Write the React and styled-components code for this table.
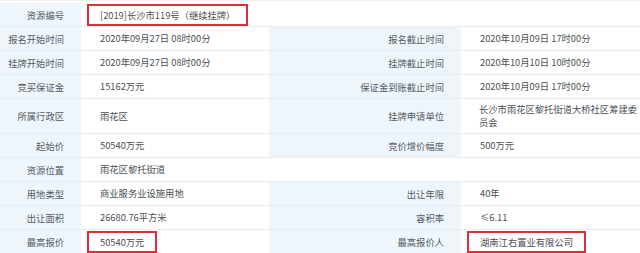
import React from 'react';
import styled, {createGlobalStyle} from "styled-components";

const GlobalStyle = createGlobalStyle`
    html, body {
        margin: 0;
        padding: 0;
        background: #fff;
    }
    body {
        font-family: "Noto Sans CJK SC", "Noto Sans", sans-serif;
    }
`

const rows = [
	{label: "资源编号", value: "[2019]长沙市119号（继续挂牌）", full: true, mark: true},
	{label: "报名开始时间", value: "2020年09月27日 08时00分", label2: "报名截止时间", value2: "2020年10月09日 17时00分"},
	{label: "挂牌开始时间", value: "2020年09月27日 08时00分", label2: "挂牌截止时间", value2: "2020年10月10日 10时00分"},
	{label: "竞买保证金", value: "15162万元", label2: "保证金到账截止时间", value2: "2020年10月09日 17时00分"},
	{label: "所属行政区", value: "雨花区", label2: "挂牌申请单位", value2: "长沙市雨花区黎托街道大桥社区筹建委员会", tall: true},
	{label: "起始价", value: "50540万元", label2: "竞价增价幅度", value2: "500万元"},
	{label: "资源位置", value: "雨花区黎托街道", full: true},
	{label: "用地类型", value: "商业服务业设施用地", label2: "出让年限", value2: "40年"},
	{label: "出让面积", value: "26680.76平方米", label2: "容积率", value2: "≤6.11"},
	{label: "最高报价", value: "50540万元", label2: "最高报价人", value2: "湖南江右置业有限公司", mark: true, mark2: true},
]

const App = () => {
	return (
		<>
			<GlobalStyle/>
			<Table>
				{rows.map((row, index) => (
					<Row key={index} $tall={row.tall}>
						<Label>{row.label}</Label>
						{row.full ?
							<Value $full>
								{row.mark ? <Mark>{row.value}</Mark> : row.value}
							</Value> :
							<>
								<Value>{row.mark ? <Mark>{row.value}</Mark> : row.value}</Value>
								<Label>{row.label2}</Label>
								<Value $wrap={row.tall}>
									{row.mark2 ? <Mark>{row.value2}</Mark> : row.value2}
								</Value>
							</>
						}
					</Row>
				))}
			</Table>
		</>
	);
};

export default App;

export const Table = styled.div`
    width: 640px;
    padding-top: 2px;
    border-top: 1px solid #eef1f4;
    box-sizing: border-box;
    font-size: 9.3px;
`
export const Row = styled.div`
    display: grid;
    grid-template-columns: 81px 188px 192px 179px;
    height: ${({$tall}) => $tall ? "35px" : "24px"};
    border-bottom: 1px solid #e7ecf1;
    box-sizing: border-box;
`
export const Label = styled.div`
    background: #eef6fc;
    color: #555a60;
    display: flex;
    align-items: center;
    justify-content: flex-end;
    padding-right: 17px;
    white-space: nowrap;
`
export const Value = styled.div`
    grid-column: ${({$full}) => $full ? "span 3" : "auto"};
    background: #fff;
    color: #4a4f55;
    display: flex;
    align-items: center;
    padding-left: ${({$wrap}) => $wrap ? "18px" : "19px"};
    padding-right: 0;
    line-height: 13px;
    white-space: ${({$wrap}) => $wrap ? "normal" : "nowrap"};
`
export const Mark = styled.span`
    display: inline-block;
    margin-left: -13px;
    padding: 3px 11px 3px 11px;
    border: 2px solid #e02f35;
    line-height: 12px;
`
